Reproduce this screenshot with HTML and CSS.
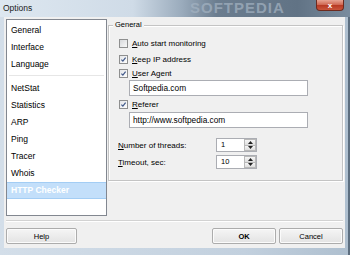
FILE: index.html
```html
<!DOCTYPE html>
<html lang="en">
<head>
  <meta charset="UTF-8">
  <title>Options</title>
  <link rel="stylesheet" href="styles.css">
</head>
<body>
  <div class="window">
    <div class="titlebar">
      <span class="title">Options</span>
      <span class="watermark">SOFTPEDIA</span>
      <button class="close">x</button>
    </div>
    <div class="client">
      <div class="main">
        <ul class="pages">
          <li>General</li>
          <li>Interface</li>
          <li>Language</li>
          <li class="divider"></li>
          <li>NetStat</li>
          <li>Statistics</li>
          <li>ARP</li>
          <li>Ping</li>
          <li>Tracer</li>
          <li>Whois</li>
          <li class="selected">HTTP Checker</li>
        </ul>
        <div class="group">
          <span class="group-title">General</span>
          <label class="check first"><span class="box"></span><span><u>A</u>uto start monitoring</span></label>
          <label class="check gap"><span class="box checked"><svg viewBox="0 0 9 9"><path d="M1.8 4.6 L3.7 6.6 L7.2 2"/></svg></span><span><u>K</u>eep IP address</span></label>
          <label class="check"><span class="box checked"><svg viewBox="0 0 9 9"><path d="M1.8 4.6 L3.7 6.6 L7.2 2"/></svg></span><span><u>U</u>ser Agent</span></label>
          <div class="field">Softpedia.com</div>
          <label class="check after-field"><span class="box checked"><svg viewBox="0 0 9 9"><path d="M1.8 4.6 L3.7 6.6 L7.2 2"/></svg></span><span><u>R</u>eferer</span></label>
          <div class="field after-check">http://www.softpedia.com</div>
          <div class="spin-row first-spin">
            <span class="spin-label"><u>N</u>umber of threads:</span>
            <div class="spin">
              <span class="spin-value">1</span>
              <span class="spin-arrows">
                <span class="arrow"><svg viewBox="0 0 5 3"><path d="M0 3 L2.5 0 L5 3 Z"/></svg></span>
                <span class="arrow"><svg viewBox="0 0 5 3"><path d="M0 0 L2.5 3 L5 0 Z"/></svg></span>
              </span>
            </div>
          </div>
          <div class="spin-row">
            <span class="spin-label"><u>T</u>imeout, sec:</span>
            <div class="spin">
              <span class="spin-value">10</span>
              <span class="spin-arrows">
                <span class="arrow"><svg viewBox="0 0 5 3"><path d="M0 3 L2.5 0 L5 3 Z"/></svg></span>
                <span class="arrow"><svg viewBox="0 0 5 3"><path d="M0 0 L2.5 3 L5 0 Z"/></svg></span>
              </span>
            </div>
          </div>
        </div>
      </div>
      <div class="separator"></div>
      <div class="buttons">
        <button class="btn help">Help</button>
        <button class="btn ok">OK</button>
        <button class="btn cancel">Cancel</button>
      </div>
    </div>
  </div>
</body>
</html>
```

FILE: styles.css
```css
body { margin: 0; font-family: "Liberation Sans", Arial, sans-serif; color: #000; }
.window { width: 350px; height: 255px; overflow: hidden; display: flex; flex-direction: column; background: linear-gradient(90deg, #d3dee9, #c2d0de 70%, #aebfcf); box-shadow: inset -2px 0 0 #5d6e7f; }
.titlebar { position: relative; height: 17px; display: flex; align-items: flex-start; overflow: hidden; background: linear-gradient(90deg, #dde7f0 0%, #cfdbe7 38%, #9aabbc 52%, #6b7d8f 62%, #617385 85%, #7a8c9e 100%); }
.title { position: relative; z-index: 1; padding: 3px 0 0 3px; font-size: 8.5px; line-height: 10px; color: #1a1a1a; }
.watermark { position: absolute; left: 190px; top: 0; font-size: 15px; line-height: 16px; font-weight: bold; letter-spacing: 1px; color: #a4b3c2; opacity: 0.7; }
.close { position: relative; margin-left: auto; margin-right: 6px; width: 28px; height: 11px; padding: 0; border: 1px solid #6d2a1e; border-top: 0; border-radius: 0 0 4px 4px; background: linear-gradient(#e7a493, #d06a55 45%, #b83a24 55%, #c9563c); color: #fff; font-family: "Liberation Sans", Arial, sans-serif; font-size: 8px; font-weight: bold; line-height: 9px; }

.client { height: 231px; margin: 0 5px 0 4px; padding: 2px 2px 0 2px; box-sizing: border-box; background: #f0f0f0; display: flex; flex-direction: column; }
.main { display: flex; height: 197px; }

.pages { list-style: none; margin: 0; padding: 2px 0; width: 101px; box-sizing: border-box; border: 1px solid #828790; background: #fff; font-size: 8.5px; }
.pages li { height: 17px; line-height: 17px; padding-left: 4px; box-sizing: border-box; white-space: nowrap; }
.pages .divider { height: 0; margin: 2px 2px 4px; border-top: 1px solid #e6e6e6; }
.pages .selected { background: #c3dffa; border-top: 1px solid #a3cdf4; border-bottom: 1px solid #a3cdf4; line-height: 15px; color: #fff; font-weight: bold; }

.group { position: relative; width: 235px; height: 156px; margin: 6px 0 0 1px; box-sizing: border-box; border: 1px solid #c4c4c4; box-shadow: inset 1px 1px 0 #fff, 1px 1px 0 #fff; }
.group-title { position: absolute; left: 4px; top: -6px; padding: 0 2px; background: #f0f0f0; font-size: 7.5px; line-height: 10px; }

.check { position: relative; display: flex; align-items: center; gap: 4px; height: 14px; padding-left: 10px; font-size: 8px; }
.check.first { margin-top: 10px; }
.check.gap { margin-top: 2px; }
.check.after-field { margin-top: 1px; }
.box { width: 9px; height: 9px; box-sizing: border-box; border: 1px solid #8e8f8f; background: linear-gradient(135deg, #d6d8db, #f8f8f8); display: flex; }
.box.checked { background: linear-gradient(135deg, #e4e6e9, #fdfdfd); }
.box svg { width: 7px; height: 7px; }
.box path { fill: none; stroke: #3f5788; stroke-width: 1.5; }

.field { width: 179px; height: 16px; margin-left: 20px; box-sizing: border-box; border: 1px solid #abadb3; background: #fff; padding-left: 3px; font-size: 8.3px; line-height: 14px; }
.field.after-check { margin-top: 1px; }

.spin-row { display: flex; align-items: center; height: 14px; margin-top: 3px; padding-left: 9px; font-size: 8px; }
.spin-row.first-spin { margin-top: 10px; }
.spin-label { width: 98px; }
.spin { display: flex; width: 41px; height: 14px; box-sizing: border-box; border: 1px solid #abadb3; background: #fff; }
.spin-value { flex: 1; padding-left: 4px; font-size: 7.5px; line-height: 12px; }
.spin-arrows { width: 12px; display: flex; flex-direction: column; }
.arrow { flex: 1; display: flex; align-items: center; justify-content: center; border: 1px solid #b9b9b9; background: linear-gradient(#f6f6f6, #dedede); }
.arrow + .arrow { border-top: 0; }
.arrow svg { width: 5px; height: 3px; }
.arrow path { fill: #222; }

.separator { height: 0; margin-top: 4px; border-top: 1px solid #d2d2d2; border-bottom: 1px solid #fff; }
.buttons { display: flex; gap: 3px; height: 16px; margin-top: 6px; }
.btn { height: 16px; padding: 0; border: 1px solid #acacac; border-radius: 2px; background: linear-gradient(#f5f5f5, #e3e3e3); box-shadow: inset 0 0 0 1px #fbfbfb; font-family: "Liberation Sans", Arial, sans-serif; font-size: 7.5px; color: #000; }
.help { width: 71px; margin-right: auto; }
.ok { width: 64px; font-weight: bold; }
.cancel { width: 64px; }
```
